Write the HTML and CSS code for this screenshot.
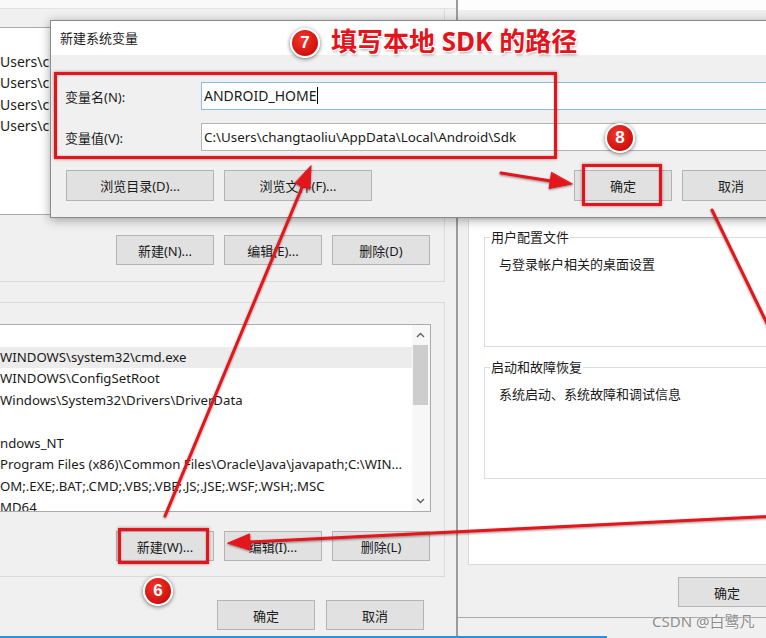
FILE: index.html
```html
<!DOCTYPE html>
<html lang="zh-CN">
<head>
    <meta charset="UTF-8">
    <title>新建系统变量</title>
    <link rel="stylesheet" href="styles.css">
</head>
<body>
    <!-- 环境变量 window, behind -->
    <section class="envwin">
        <div class="env-top"></div>
        <div class="vargroup user">
            <div class="listbox">
                <div class="rows">
                    <div class="row">Users\changtaoliu\AppData\Local\Microsoft\WindowsApps</div>
                    <div class="row">Users\changtaoliu\OneDrive</div>
                    <div class="row">Users\changtaoliu\AppData\Local\Temp</div>
                    <div class="row">Users\changtaoliu\AppData\Local\Temp</div>
                </div>
            </div>
            <div class="btnrow">
                <button class="btn">新建(N)...</button>
                <button class="btn">编辑(E)...</button>
                <button class="btn">删除(D)</button>
            </div>
        </div>
        <div class="vargroup sys">
            <div class="listbox">
                <div class="rows">
                    <div class="row"></div>
                    <div class="row selected">WINDOWS\system32\cmd.exe</div>
                    <div class="row">WINDOWS\ConfigSetRoot</div>
                    <div class="row">Windows\System32\Drivers\DriverData</div>
                    <div class="row"></div>
                    <div class="row">ndows_NT</div>
                    <div class="row">Program Files (x86)\Common Files\Oracle\Java\javapath;C:\WIN...</div>
                    <div class="row">OM;.EXE;.BAT;.CMD;.VBS;.VBE;.JS;.JSE;.WSF;.WSH;.MSC</div>
                    <div class="row">MD64</div>
                </div>
                <div class="vscroll">
                    <svg class="chev" width="17" height="20" viewBox="0 0 17 20"><polyline points="5,12 8.5,8.5 12,12" /></svg>
                    <div class="thumb"></div>
                    <div class="track"></div>
                    <svg class="chev" width="17" height="20" viewBox="0 0 17 20"><polyline points="5,8 8.5,11.5 12,8" /></svg>
                </div>
            </div>
            <div class="btnrow">
                <button class="btn">新建(W)...</button>
                <button class="btn">编辑(I)...</button>
                <button class="btn">删除(L)</button>
            </div>
        </div>
        <div class="env-footer">
            <button class="btn">确定</button>
            <button class="btn">取消</button>
        </div>
    </section>

    <!-- 系统属性 window -->
    <section class="sysprops">
        <div class="sp-top"></div>
        <div class="tabpage">
            <fieldset class="gbox">
                <legend>用户配置文件</legend>
                <p>与登录帐户相关的桌面设置</p>
            </fieldset>
            <fieldset class="gbox tall">
                <legend>启动和故障恢复</legend>
                <p>系统启动、系统故障和调试信息</p>
            </fieldset>
        </div>
        <button class="btn sp-ok">确定</button>
    </section>

    <!-- 新建系统变量 dialog -->
    <section class="newvar">
        <div class="nv-title">新建系统变量</div>
        <div class="nv-body">
            <div class="nv-row">
                <label class="nv-label">变量名(N):</label>
                <div class="field focus">ANDROID_HOME<span class="caret"></span></div>
            </div>
            <div class="nv-row">
                <label class="nv-label">变量值(V):</label>
                <div class="field path">C:\Users\changtaoliu\AppData\Local\Android\Sdk</div>
            </div>
            <div class="nv-buttons">
                <button class="btn wide">浏览目录(D)...</button>
                <button class="btn wide">浏览文件(F)...</button>
                <button class="btn push">确定</button>
                <button class="btn">取消</button>
            </div>
        </div>
    </section>

    <!-- annotations -->
    <svg class="arrows" width="766" height="638" viewBox="0 0 766 638">
        <defs>
            <filter id="sh" x="-10%" y="-10%" width="120%" height="120%">
                <feDropShadow dx="0" dy="1" stdDeviation="1" flood-color="#000" flood-opacity="0.45"/>
            </filter>
        </defs>
        <g filter="url(#sh)" stroke="#e3141b" stroke-width="3" fill="#e3141b" stroke-linecap="round">
            <line x1="165" y1="516" x2="303" y2="185"/>
            <polygon stroke-width="1" points="311,166 309.9,189.4 295.1,183.2"/>
            <line x1="501" y1="173" x2="551" y2="181"/>
            <polygon stroke-width="1" points="572,184 549.1,188.5 551.5,172.7"/>
            <line x1="712" y1="210" x2="775" y2="340"/>
            <line x1="780" y1="516" x2="249" y2="542"/>
            <polygon stroke-width="1" points="228,543 249.6,533.9 250.4,549.9"/>
        </g>
    </svg>

    <div class="mark mark-fields"></div>
    <div class="mark mark-ok"></div>
    <div class="mark mark-new"></div>

    <div class="step step-7">7</div>
    <div class="step step-8">8</div>
    <div class="step step-6">6</div>

    <div class="callout">填写本地 SDK 的路径</div>

    <div class="watermark">CSDN @白鹭凡</div>
    <div class="taskline"></div>
</body>
</html>
```

FILE: styles.css
```css
* {
    margin: 0;
    padding: 0;
    box-sizing: border-box;
}

:root {
    --face: #f0f0f0;
    --btn: #e1e1e1;
    --btn-border: #b4b4b4;
    --line: #dadada;
    --red: #e3141b;
    --ui-font: "Noto Sans", "Noto Sans CJK SC", sans-serif;
}

body {
    position: relative;
    width: 766px;
    height: 638px;
    overflow: hidden;
    background: var(--face);
    font-family: var(--ui-font);
    font-size: 13px;
    color: #1a1a1a;
}

.btn {
    width: 98px;
    height: 30px;
    background: var(--btn);
    border: 1px solid var(--btn-border);
    font-family: var(--ui-font);
    font-size: 13px;
    color: #1a1a1a;
}

/* ---- environment variables window ---- */

.envwin {
    position: absolute;
    left: 0;
    top: 0;
    width: 458px;
    height: 638px;
    border-right: 2px solid #9c9c9c;
    display: flex;
    flex-direction: column;
    overflow: hidden;
}

.env-top {
    height: 9px;
    background: #f9f9f9;
    border-bottom: 1px solid #e2e2e2;
}

.vargroup {
    width: 445px;
    border-right: 1px solid var(--line);
    border-bottom: 1px solid var(--line);
}

.vargroup.user {
    height: 273px;
    padding-top: 18px;
}

.vargroup.sys {
    height: 275px;
    margin-top: 20px;
    padding-top: 21px;
    border-top: 1px solid var(--line);
}

.listbox {
    display: flex;
    width: 431px;
    height: 188px;
    background: #fff;
    border: 1px solid #ababab;
    border-left: none;
    overflow: hidden;
}

.rows {
    flex: 1;
    min-width: 0;
}

.user .rows {
    padding-top: 23px;
}

.row {
    height: 21.5px;
    line-height: 21.5px;
    font-size: 13.2px;
    white-space: nowrap;
    overflow: hidden;
}

.user .row {
    height: 21.3px;
    line-height: 21.3px;
    font-size: 14px;
}

.row.selected {
    background: #ececec;
}

.vscroll {
    width: 18px;
    display: flex;
    flex-direction: column;
    background: #f7f7f7;
}

.chev {
    display: block;
    fill: none;
    stroke: #606060;
    stroke-width: 1.4;
}

.thumb {
    height: 60px;
    margin: 0 2px 0 1px;
    background: #cdcdcd;
}

.track {
    flex: 1;
}

.btnrow {
    display: flex;
    justify-content: flex-end;
    gap: 10px;
    padding-right: 14px;
}

.user .btnrow {
    margin-top: 20px;
}

.sys .btnrow {
    margin-top: 19px;
}

.env-footer {
    display: flex;
    justify-content: flex-end;
    gap: 11px;
    margin-top: 23px;
    padding-right: 32px;
}

/* ---- system properties window ---- */

.sysprops {
    position: absolute;
    left: 458px;
    top: 0;
    width: 308px;
    height: 618px;
    border-bottom: 1px solid #a9a9a9;
    display: flex;
    flex-direction: column;
}

.sp-top {
    height: 10px;
    background: #fdfdfd;
}

.tabpage {
    height: 345px;
    margin: 210px 0 0 10px;
    padding-left: 15px;
    background: #fff;
    border-left: 1px solid #d9d9d9;
    border-bottom: 1px solid #d9d9d9;
}

.gbox {
    width: 300px;
    height: 119px;
    margin-top: 8px;
    border: 1px solid #dcdcdc;
    border-right: none;
}

.gbox.tall {
    height: 121px;
    margin-top: 11px;
}

.gbox legend {
    margin-left: 5px;
    padding: 0 1px;
    line-height: 18px;
}

.gbox p {
    margin-top: 9px;
    padding-left: 14px;
    line-height: 18px;
}

.sp-ok {
    margin: 12px 0 0 220px;
}

/* ---- new variable dialog ---- */

.newvar {
    position: absolute;
    left: 50px;
    top: 20px;
    width: 746px;
    height: 198px;
    background: var(--face);
    border: 1px solid #8a8a8a;
    box-shadow: 0 2px 10px rgba(0, 0, 0, 0.35);
}

.nv-title {
    height: 34px;
    line-height: 34px;
    padding-left: 9px;
    background: #fff;
}

.nv-body {
    padding: 27px 15px 0 14px;
}

.nv-row {
    display: flex;
    align-items: center;
    margin-bottom: 13px;
}

.nv-label {
    width: 136px;
}

.field {
    flex: 1;
    height: 28px;
    line-height: 26px;
    padding-left: 2px;
    background: #fff;
    border: 1px solid #b4b4b4;
    font-size: 14px;
    white-space: nowrap;
}

.field.path {
    font-size: 13.4px;
}

.field.focus {
    border-color: #8ebbe4;
}

.caret {
    display: inline-block;
    width: 1px;
    height: 17px;
    margin-left: 1px;
    vertical-align: -3px;
    background: #000;
}

.nv-buttons {
    display: flex;
    gap: 10px;
    margin-top: 19px;
    padding-left: 1px;
}

.nv-buttons .btn {
    height: 31px;
}

.nv-buttons .wide {
    width: 148px;
}

.nv-buttons .push {
    margin-left: auto;
}

/* ---- annotations ---- */

.arrows {
    position: absolute;
    left: 0;
    top: 0;
}

.mark {
    position: absolute;
    border: 3px solid var(--red);
    box-shadow: 0 0 3px rgba(110, 0, 0, 0.5), inset 0 0 2px rgba(110, 0, 0, 0.4);
}

.mark-fields {
    left: 54px;
    top: 72px;
    width: 503px;
    height: 87px;
}

.mark-ok {
    left: 582px;
    top: 164px;
    width: 80px;
    height: 42px;
}

.mark-new {
    left: 118px;
    top: 528px;
    width: 91px;
    height: 36px;
}

.step {
    position: absolute;
    width: 30px;
    height: 30px;
    border-radius: 50%;
    border: 2px solid #fff;
    background: radial-gradient(circle at 40% 35%, #f2382c, #c20000);
    box-shadow: 0 1px 4px rgba(0, 0, 0, 0.55);
    color: #fff;
    font: bold 17px "Liberation Sans", sans-serif;
    display: flex;
    align-items: center;
    justify-content: center;
}

.step-7 { left: 290px; top: 28px; }
.step-8 { left: 605px; top: 123px; }
.step-6 { left: 143px; top: 576px; }

.callout {
    position: absolute;
    left: 331px;
    top: 27px;
    font-size: 26px;
    line-height: 28px;
    font-weight: bold;
    color: var(--red);
    white-space: nowrap;
    text-shadow: 1px 1px 0 #fff, -1px -1px 0 #fff, 1px -1px 0 #fff, -1px 1px 0 #fff, 1px 2px 3px rgba(0, 0, 0, 0.35);
}

.watermark {
    position: absolute;
    left: 652px;
    top: 610px;
    font-size: 15px;
    color: #8c8c8c;
    text-shadow: 0 0 2px #fff;
}

.taskline {
    position: absolute;
    left: 0;
    bottom: 0;
    width: 607px;
    height: 2px;
    background: #2f8fdc;
}
```
